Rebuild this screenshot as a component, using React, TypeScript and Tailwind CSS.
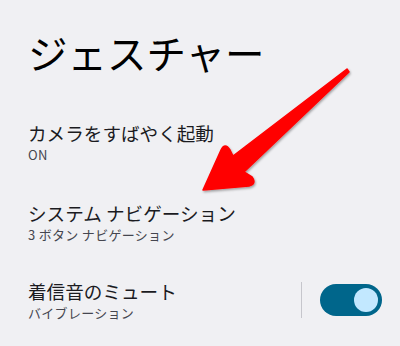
const Item = ({ title, sub }: { title: string; sub: string }) => {
  return (
    <div className="flex flex-col">
      <p className="text-[18.6px] leading-[26px] text-[#1b1b1f]">{title}</p>
      <p className="text-[13px] leading-[18px] tracking-[0.3px] text-[#45464f]">{sub}</p>
    </div>
  );
};

const Arrow = () => {
  return (
    <svg
      className="absolute left-0 top-0"
      width="400"
      height="346"
      viewBox="0 0 400 346"
    >
      <defs>
        <filter id="sh" x="-20%" y="-20%" width="140%" height="140%">
          <feDropShadow dx="1" dy="1.5" stdDeviation="1.2" floodColor="#000" floodOpacity="0.35" />
        </filter>
      </defs>
      <path
        d="M347 69 L349 72 L244 172 L252 177 Q257 184 249 186 L203 190 L221 150 Q225 142 230 150 L233 156 Z"
        fill="#ff0000"
        stroke="#f00"
        strokeWidth="1.5"
        strokeLinejoin="round"
        filter="url(#sh)"
      />
    </svg>
  );
};

export default function App() {
  return (
    <div
      className="relative h-[346px] w-[400px] overflow-hidden bg-[#f0f0f3]"
      style={{ fontFamily: '"Noto Sans CJK JP", "Noto Sans", sans-serif' }}
    >
      <div className="flex flex-col pl-[28px] pr-[18px]">
        <h1 className="mt-[24px] text-[39.5px] leading-[56px] text-black">ジェスチャー</h1>
        <div className="mt-[40px]">
          <Item title="カメラをすばやく起動" sub="ON" />
        </div>
        <div className="mt-[36px]">
          <Item title="システム ナビゲーション" sub="3 ボタン ナビゲーション" />
        </div>
        <div className="mt-[34px] flex items-center">
          <div className="flex-1">
            <Item title="着信音のミュート" sub="バイブレーション" />
          </div>
          <div className="h-[36px] w-px bg-[#c6c6cc]" />
          <div className="ml-[18px] flex h-[32px] w-[62px] items-center justify-end rounded-full bg-[#00668b] pr-[4px]">
            <div className="h-[24px] w-[24px] rounded-full bg-[#c2e8ff]" />
          </div>
        </div>
      </div>
      <Arrow />
    </div>
  );
}
